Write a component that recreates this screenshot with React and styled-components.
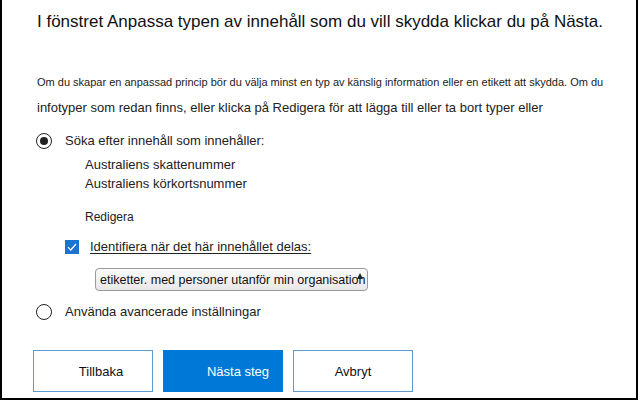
import React from 'react';
import styled, { createGlobalStyle } from 'styled-components';

const GlobalStyle = createGlobalStyle`
  html, body {
    margin: 0;
    padding: 0;
    background: #ffffff;
  }
  body {
    font-family: "Liberation Sans", Arial, sans-serif;
    color: #1a1a1a;
  }
`;

const Frame = styled.div`
  box-sizing: border-box;
  width: 638px;
  height: 400px;
  border: 2px solid #000;
  border-top: none;
  padding: 12px 0 0 31px;
  display: flex;
  flex-direction: column;
  overflow: hidden;
`;

const Title = styled.h1`
  margin: 0 0 0 4px;
  font-size: 17px;
  font-weight: normal;
  line-height: 20px;
  color: #111;
  white-space: nowrap;
`;

const Intro = styled.div`
  margin: 42px 0 0 4px;
  display: flex;
  flex-direction: column;
  gap: 10px;
  white-space: nowrap;
`;

const IntroLine = styled.div`
  font-size: ${p => (p.$small ? '11px' : '13px')};
  line-height: 16px;
  color: #222;
`;

const Options = styled.div`
  margin-top: 16px;
  display: flex;
  flex-direction: column;
`;

const RadioRow = styled.label`
  display: flex;
  align-items: center;
  gap: 13px;
  font-size: 13px;
  line-height: 18px;
  color: #222;
  margin-left: 3px;
`;

const RadioCircle = styled.span`
  box-sizing: border-box;
  width: 16px;
  height: 16px;
  border-radius: 50%;
  border: 1.5px solid #222;
  display: flex;
  align-items: center;
  justify-content: center;
  flex-shrink: 0;

  &::after {
    content: '';
    width: 8px;
    height: 8px;
    border-radius: 50%;
    background: #222;
    display: ${p => (p.$checked ? 'block' : 'none')};
  }
`;

const TypeList = styled.div`
  margin: 5px 0 0 52px;
  display: flex;
  flex-direction: column;
  font-size: 13px;
  line-height: 19px;
  color: #222;
`;

const EditLink = styled.div`
  margin: 16px 0 0 52px;
  font-size: 12px;
  line-height: 16px;
  color: #222;
`;

const CheckRow = styled.label`
  margin: 14px 0 0 32px;
  display: flex;
  align-items: center;
  gap: 11px;
  font-size: 13px;
  line-height: 16px;
  color: #222;
`;

const CheckBox = styled.span`
  width: 14px;
  height: 14px;
  background: #1e73d2;
  display: flex;
  align-items: center;
  justify-content: center;
  flex-shrink: 0;
`;

const CheckLabel = styled.span`
  text-decoration: underline;
  text-underline-offset: 2px;
`;

const SelectBox = styled.div`
  position: relative;
  box-sizing: border-box;
  margin: 13px 0 0 62px;
  width: 273px;
  height: 23px;
  border: 1px solid #9a9a9a;
  border-radius: 4px;
  background: linear-gradient(#fafafa, #e8e8e8);
  display: flex;
  align-items: center;
  padding-left: 4px;
  font-size: 12.5px;
  color: #111;
  white-space: nowrap;
`;

const Arrow = styled.span`
  position: absolute;
  right: 4px;
  top: 4px;
  width: 0;
  height: 0;
  border-left: 3.5px solid transparent;
  border-right: 3.5px solid transparent;
  border-bottom: 6px solid #222;
`;

const SecondRadio = styled(RadioRow)`
  margin-top: 12px;
`;

const ButtonRow = styled.div`
  margin-top: 29px;
  display: flex;
  gap: 10px;
`;

const Button = styled.button`
  box-sizing: border-box;
  width: 120px;
  height: 42px;
  font-family: "Liberation Sans", Arial, sans-serif;
  font-size: 13px;
  border: 1.5px solid ${p => (p.$primary ? '#0078d7' : '#5b9bd5')};
  background: ${p => (p.$primary ? '#0078d7' : '#ffffff')};
  color: ${p => (p.$primary ? '#ffffff' : '#111')};
  padding: 0 0 0 ${p => p.$shift || 0}px;
  cursor: pointer;
`;

export default function App() {
  return (
    <>
      <GlobalStyle />
      <Frame>
        <Title>I fönstret Anpassa typen av innehåll som du vill skydda klickar du på Nästa.</Title>
        <Intro>
          <IntroLine $small>
            Om du skapar en anpassad princip bör du välja minst en typ av känslig information eller en etikett att skydda. Om du
          </IntroLine>
          <IntroLine>
            infotyper som redan finns, eller klicka på Redigera för att lägga till eller ta bort typer eller
          </IntroLine>
        </Intro>
        <Options>
          <RadioRow>
            <RadioCircle $checked />
            Söka efter innehåll som innehåller:
          </RadioRow>
          <TypeList>
            <span>Australiens skattenummer</span>
            <span>Australiens körkortsnummer</span>
          </TypeList>
          <EditLink>Redigera</EditLink>
          <CheckRow>
            <CheckBox>
              <svg width="10" height="8" viewBox="0 0 10 8">
                <path d="M1 4.2 L3.8 7 L9 1" fill="none" stroke="#fff" strokeWidth="1.2" />
              </svg>
            </CheckBox>
            <CheckLabel>Identifiera när det här innehållet delas:</CheckLabel>
          </CheckRow>
          <SelectBox>
            etiketter. med personer utanför min organisation
            <Arrow />
          </SelectBox>
          <SecondRadio>
            <RadioCircle />
            Använda avancerade inställningar
          </SecondRadio>
        </Options>
        <ButtonRow>
          <Button $shift={16}>Tillbaka</Button>
          <Button $primary $shift={30}>Nästa steg</Button>
          <Button>Avbryt</Button>
        </ButtonRow>
      </Frame>
    </>
  );
}
